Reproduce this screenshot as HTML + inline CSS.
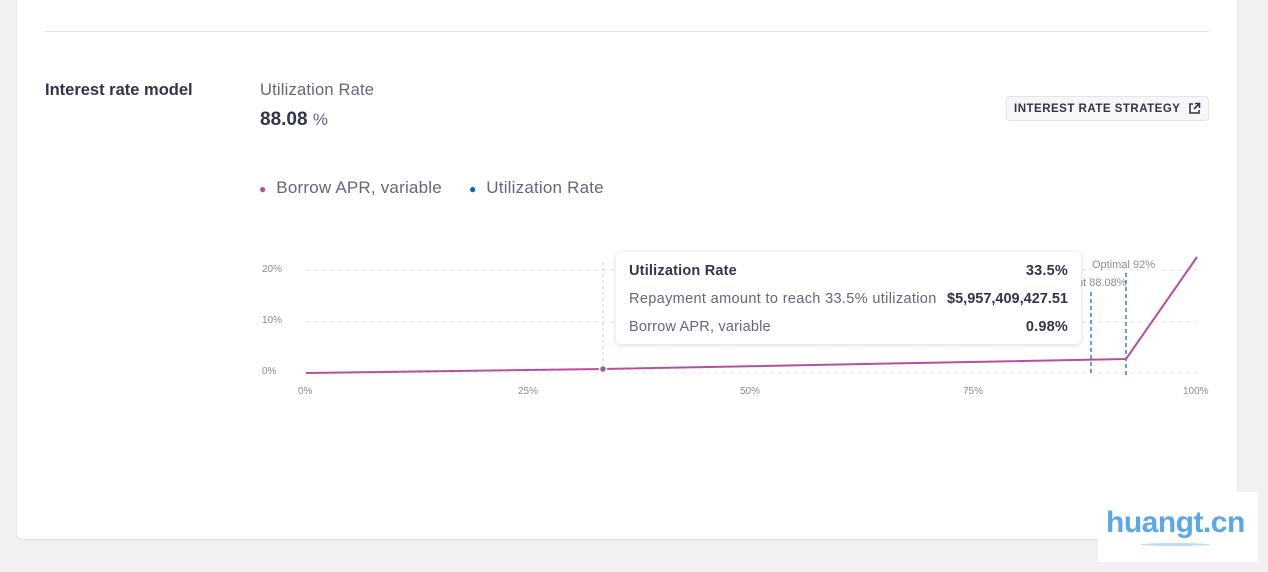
<!DOCTYPE html>
<html><head><style>
body{margin:0;width:1268px;height:572px;background:#f1f1f3;font-family:"Liberation Sans",sans-serif;position:relative;overflow:hidden;color:#303549}
.card{position:absolute;left:17px;top:-10px;width:1220px;height:549px;background:#fff;border-radius:6px;box-shadow:0 1px 2px rgba(0,0,0,.08)}
.abs{position:absolute}
</style></head><body>
<div class="card"></div>
<div class="abs" style="left:45px;top:31px;width:1164px;height:1px;background:#e4e5ea"></div>
<div class="abs" style="left:45px;top:81px;font-size:16.5px;font-weight:bold">Interest rate model</div>
<div class="abs" style="left:260px;top:81px;font-size:16.5px;color:#62677b;letter-spacing:.2px">Utilization Rate</div>
<div class="abs" style="left:260px;top:109px;font-size:19px;font-weight:bold">88.08 <span style="font-weight:normal;color:#62677b;font-size:17px">%</span></div>
<div class="abs" style="left:1006px;top:96px;width:203px;height:25px;border:1px solid #e4e5ea;border-radius:4px;background:#f7f7f9;font-size:11.5px;font-weight:bold;letter-spacing:.5px;line-height:24px;padding-left:7px;box-sizing:border-box">INTEREST RATE STRATEGY
<svg class="abs" style="left:181px;top:5px" width="13" height="13" viewBox="0 0 13 13" fill="none" stroke="#303549" stroke-width="1.6"><path d="M5 2H2v9h9V8M7 1.5h4.5V6M11.5 1.5L6 7"/></svg></div>
<div class="abs" style="left:259px;top:178px;font-size:17px;color:#62677b;letter-spacing:.2px"><span style="color:#b6509e;font-size:12px">●</span>&nbsp; Borrow APR, variable</div>
<div class="abs" style="left:469px;top:178px;font-size:17px;color:#62677b;letter-spacing:.2px"><span style="color:#0062d2;font-size:12px">●</span>&nbsp; Utilization Rate</div>
<svg class="abs" style="left:0;top:0" width="1268" height="572">
<g stroke="#e4e5ea" stroke-dasharray="4 4"><line x1="306" y1="270" x2="1197" y2="270"/><line x1="306" y1="322" x2="1197" y2="322"/><line x1="306" y1="373" x2="1197" y2="373"/></g>
<line x1="603" y1="262" x2="603" y2="373" stroke="#ccc" stroke-dasharray="3 3"/>
<g font-size="10" fill="#8a8d99" font-family="Liberation Sans"><text x="262" y="272">20%</text><text x="262" y="323">10%</text><text x="262" y="374">0%</text>
<text x="298" y="394">0%</text><text x="518" y="394">25%</text><text x="740" y="394">50%</text><text x="963" y="394">75%</text><text x="1183" y="394">100%</text>
<text x="1092" y="268" font-size="11">Optimal 92%</text><text x="1077" y="286" font-size="11">nt 88.08%</text></g>
<g stroke="#0062d2" stroke-dasharray="4 3" stroke-width="1.2"><line x1="1091" y1="292" x2="1091" y2="375"/><line x1="1126" y1="273" x2="1126" y2="375"/></g>
<polyline points="306,373 603,369 1126,359 1197,257" fill="none" stroke="#b6509e" stroke-width="2"/>
<circle cx="603" cy="369" r="3.5" fill="#8a6a86" stroke="#fff" stroke-width="1.5"/>
</svg>
<div class="abs" style="left:616px;top:252px;width:465px;height:92px;background:#fff;border-radius:5px;box-shadow:0 1px 6px rgba(0,0,0,.15);font-size:14.5px;color:#62677b;letter-spacing:.2px">
<div class="abs" style="left:13px;top:11px;font-weight:bold;color:#303549">Utilization Rate</div>
<div class="abs" style="right:13px;top:11px;font-weight:bold;color:#303549">33.5%</div>
<div class="abs" style="left:13px;top:39px;letter-spacing:.35px">Repayment amount to reach 33.5% utilization</div>
<div class="abs" style="right:13px;top:39px;font-weight:bold;color:#303549;letter-spacing:0">$5,957,409,427.51</div>
<div class="abs" style="left:13px;top:67px">Borrow APR, variable</div>
<div class="abs" style="right:13px;top:67px;font-weight:bold;color:#303549">0.98%</div>
</div>
<div class="abs" style="left:1098px;top:492px;width:160px;height:70px;background:#fff"></div>
<div class="abs" style="left:1106px;top:506px;font-size:30px;font-weight:bold;color:#5aa7ea;letter-spacing:-.5px">huangt.cn</div>
<div class="abs" style="left:1140px;top:543px;width:70px;height:3px;border-radius:50%;background:#bcdcf5"></div>
</body></html>
